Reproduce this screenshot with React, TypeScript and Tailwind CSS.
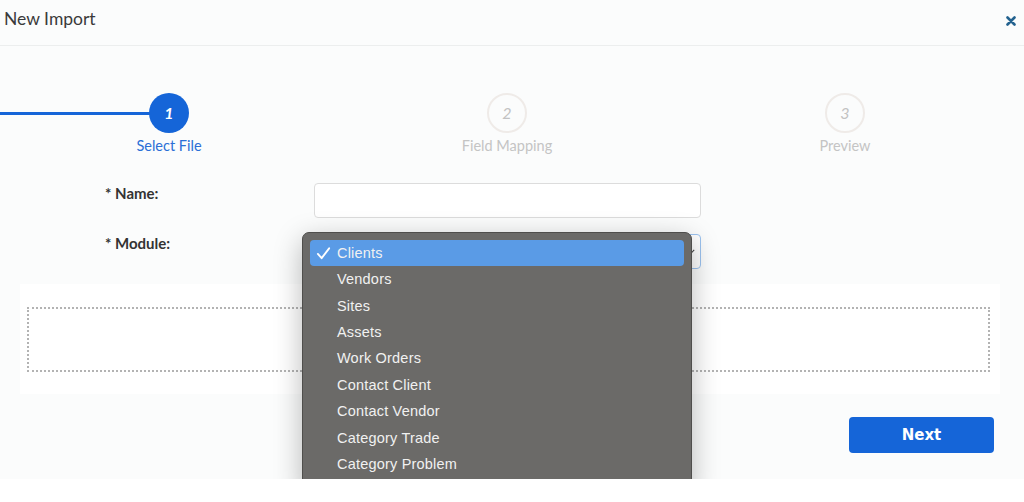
import React from 'react';

const modules = [
  'Clients',
  'Vendors',
  'Sites',
  'Assets',
  'Work Orders',
  'Contact Client',
  'Contact Vendor',
  'Category Trade',
  'Category Problem',
];

const steps = [
  { n: 1, label: 'Select File', active: true },
  { n: 2, label: 'Field Mapping', active: false },
  { n: 3, label: 'Preview', active: false },
];

const ModuleMenu: React.FC = () => (
  <div className="absolute left-[302px] top-[232px] w-[390px] h-[260px] rounded-[7px] border border-[#4f4e4c] bg-[#6b6a68] px-[7px] pt-[7px] shadow-[0_8px_28px_rgba(0,0,0,0.28)] font-['Liberation_Sans',sans-serif]">
    {modules.map((m, i) => (
      <div
        key={m}
        className={`flex items-center h-[26.4px] rounded-[4px] text-[14.5px] tracking-[0.2px] text-[#f1f1f1] ${
          i === 0 ? 'bg-[#5a9be6]' : ''
        }`}
      >
        <span className="w-[27px] pl-[6px] flex items-center">
          {i === 0 && (
            <svg width="15" height="15" viewBox="0 0 16 16" fill="none">
              <path d="M2 8.5 L6 13 L14 2.5" stroke="#ffffff" strokeWidth="2" strokeLinecap="round" strokeLinejoin="round" />
            </svg>
          )}
        </span>
        <span className="mt-[1px]">{m}</span>
      </div>
    ))}
  </div>
);

export default function App() {
  return (
    <div className="w-[1024px] h-[502px] bg-white">
      <div className="relative h-[479px] overflow-hidden bg-[#fbfcfc] font-['Lato',sans-serif] text-[#333]">
        {/* Header */}
        <div className="h-[46px] border-b border-[#eceeee] flex items-center justify-between pl-[4px] pr-[8px]">
          <span className="text-[17.5px] text-[#3a3a3a] -mt-[6px]">New Import</span>
          <svg width="10" height="10" viewBox="0 0 10 10" className="-mt-[4px]">
            <path d="M1.5 1.5 L8.5 8.5 M8.5 1.5 L1.5 8.5" stroke="#23628f" strokeWidth="2.6" strokeLinecap="round" />
          </svg>
        </div>

        {/* Stepper */}
        <div className="grid grid-cols-3 w-[1014px] mt-[47px]">
          {steps.map((s) => (
            <div key={s.n} className="relative flex flex-col items-center">
              {s.n === 1 && <div className="absolute left-0 top-[19px] w-[152px] h-[3px] bg-[#1565d8]" />}
              <div
                className={`w-10 h-10 rounded-full flex items-center justify-center italic text-[16px] ${
                  s.active ? 'bg-[#1565d8] text-white font-bold' : 'border-2 border-[#efebe8] text-[#c2c2c2]'
                }`}
              >
                {s.n}
              </div>
              <span className={`mt-[2px] text-[14.5px] ${s.active ? 'text-[#2a6fd6]' : 'text-[#c4c4c4]'}`}>{s.label}</span>
            </div>
          ))}
        </div>

        {/* Form */}
        <div className="mt-[26px] pl-[105px] flex flex-col gap-[16px]">
          <div className="flex items-center">
            <label className="w-[209px] text-[15px] font-bold text-[#333] -mt-[14px]">* Name:</label>
            <div className="w-[387px] h-[35px] bg-white border border-[#dcdcdc] rounded-[4px]" />
          </div>
          <div className="flex items-center">
            <label className="w-[209px] text-[15px] font-bold text-[#333] -mt-[16px]">* Module:</label>
            <div className="w-[387px] h-[35px] bg-white border border-[#9cc3f0] rounded-[4px] flex items-center justify-end pr-[5px]">
              <svg width="7" height="5" viewBox="0 0 7 5">
                <path d="M0.8 0.8 L3.5 3.8 L6.2 0.8" stroke="#444" strokeWidth="1.1" fill="none" />
              </svg>
            </div>
          </div>
        </div>

        {/* Upload card */}
        <div className="mt-[15px] ml-[20px] w-[980px] h-[110px] bg-white pt-[23px] pl-[7px] pr-[10px]">
          <div className="h-[65px] border-2 border-dotted border-[#b3b3b3]" />
        </div>

        {/* Footer */}
        <div className="flex justify-end pr-[30px] mt-[23px]">
          <button className="w-[145px] h-[36px] rounded-[4px] bg-[#1565d8] text-white font-bold text-[15px] font-['DejaVu_Sans',sans-serif]">
            Next
          </button>
        </div>

        <ModuleMenu />
      </div>
    </div>
  );
}
